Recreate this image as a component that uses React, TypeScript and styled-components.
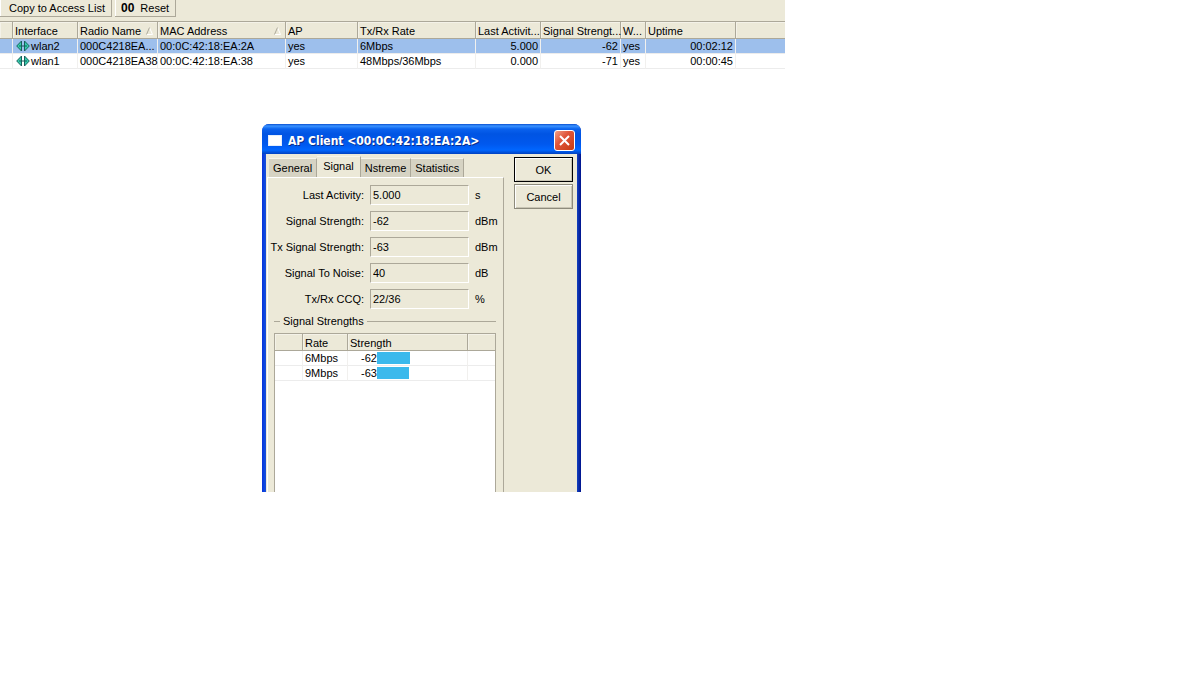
import React from "react";
import styled, { createGlobalStyle } from "styled-components";

const GlobalStyle = createGlobalStyle`
  *, *::before, *::after { box-sizing: border-box; }
  body {
    margin: 0;
    background: #fff;
    color: #000;
    font: 11px/15px "Liberation Sans", Arial, sans-serif;
  }
  button, input { font: inherit; color: inherit; margin: 0; }
`;

const ListPane = styled.section`
  width: 66%;
`;

const Toolbar = styled.div`
  display: flex;
  gap: 3px;
  height: 22px;
  padding-bottom: 4px;
  background: #ece9d8;
  border-bottom: 1px solid #aca899;
`;

const ToolButton = styled.button<{ $padLeft: number }>`
  display: flex;
  align-items: center;
  gap: 6px;
  padding: 0 6px 0 ${(p) => p.$padLeft}px;
  background: #ece9d8;
  border: solid #aca899;
  border-width: 0 1px 1px 0;
  box-shadow: inset 1px 0 #fff;
`;

const Counter = styled.b`
  font-size: 12px;
`;

const Grid = styled.table`
  width: 100%;
  table-layout: fixed;
  border-collapse: separate;
  border-spacing: 0;
`;

const HeadCell = styled.th`
  height: 17px;
  padding: 2px 0 0 2px;
  text-align: left;
  white-space: nowrap;
  font-weight: normal;
  line-height: 14px;
  background: #ece9d8;
  border-right: 1px solid #aca899;
  border-bottom: 1px solid #aca899;
  box-shadow: inset 1px 1px #f4f2e8;
  &:last-child { border-right: 0; }
`;

const HeadLine = styled.span`
  display: flex;
  align-items: center;
  justify-content: space-between;
  padding-right: 4px;
`;

const Row = styled.tr<{ $selected?: boolean }>`
  background: ${(p) => (p.$selected ? "#9dbfec" : "#fff")};
`;

const Cell = styled.td<{ $right?: boolean }>`
  height: 15px;
  padding: 0 2px;
  text-align: ${(p) => (p.$right ? "right" : "left")};
  white-space: nowrap;
  line-height: 14px;
  border-right: 1px solid #f1f0ee;
  border-bottom: 1px solid #ececec;
  &:last-child { border-right: 0; }
`;

const IconText = styled.span`
  display: flex;
  align-items: center;
  gap: 1px;
  padding-left: 1px;
`;

const Desktop = styled.main`
  padding: 55px 0 0 262px;
`;

const Dialog = styled.section`
  width: 319px;
  background: linear-gradient(90deg, #0831d9 0, #0b45e0 2px, #1c4fd8 4px, #0a3bd0 50%, #1240c0 calc(100% - 4px), #00138c 100%);
  border-radius: 7px 7px 0 0;
  overflow: hidden;
`;

const TitleBar = styled.header`
  display: flex;
  align-items: center;
  gap: 6px;
  height: 30px;
  padding: 3px 6px 0;
  background: linear-gradient(#0a4fd0 0, #3a93ff 2px, #0a62ee 5px, #0054e3 10px, #0058ee 20px, #0066ff 26px, #0040c0 30px);
`;

const WindowIcon = styled.span`
  width: 14px;
  height: 11px;
  background: #fff;
  border: 1px solid #e4eefc;
`;

const Title = styled.h1`
  flex: 1;
  margin: 0;
  color: #fff;
  font: bold 12px/16px "DejaVu Sans Condensed", "Liberation Sans", sans-serif;
  text-shadow: 1px 1px #0a2f8c;
`;

const CloseButton = styled.button`
  display: grid;
  place-items: center;
  width: 21px;
  height: 21px;
  padding: 0;
  background: linear-gradient(135deg, #f0a088, #e0563a 40%, #c63a12);
  border: 1px solid #fff;
  border-radius: 3px;
`;

const Body = styled.div`
  display: flex;
  gap: 10px;
  height: 338px;
  margin: 0 4px;
  padding: 2px 4px 0 1px;
  background: #ece9d8;
`;

const TabArea = styled.div`
  display: flex;
  flex-direction: column;
  flex: 1;
  min-width: 0;
`;

const Tabs = styled.div`
  display: flex;
  align-items: flex-end;
  height: 21px;
  padding-left: 2px;
`;

const Tab = styled.button<{ $active?: boolean }>`
  height: ${(p) => (p.$active ? 21 : 19)}px;
  padding: ${(p) => (p.$active ? "0 6px 2px" : "0 4px")};
  background: ${(p) => (p.$active ? "#ece9d8" : "#d6d3c3")};
  border: solid;
  border-width: 1px 1px 0 0;
  border-color: #f6f4ea #aca899 #f6f4ea #fff;
`;

const Panel = styled.div`
  flex: 1;
  padding: 7px 7px 0 6px;
  border: solid;
  border-width: 1px 1px 0;
  border-color: #fff #aca899 #fff #fff;
`;

const Field = styled.div`
  display: grid;
  grid-template-columns: 90px 99px 1fr;
  align-items: center;
  column-gap: 6px;
  height: 20px;
  margin-bottom: 6px;
`;

const FieldLabel = styled.label`
  justify-self: end;
  white-space: nowrap;
`;

const FieldInput = styled.input`
  width: 100%;
  height: 20px;
  padding: 0 2px;
  background: #ece9d8;
  border: 1px solid;
  border-color: #aca899 #fff #fff #aca899;
  outline: 0;
`;

const Legend = styled.h2`
  display: flex;
  align-items: center;
  gap: 3px;
  margin: 0 0 5px;
  font: inherit;
  line-height: 13px;
  &::before, &::after {
    content: "";
    width: 6px;
    border-top: 1px solid #aca899;
  }
  &::after { flex: 1; }
`;

const StrengthBox = styled.div`
  height: 159px;
  background: #fff;
  border: solid #aca899;
  border-width: 1px 1px 0;
`;

const Meter = styled.span`
  display: grid;
  grid-template-columns: 27px 1fr;
  align-items: center;
  text-align: right;
`;

const Bar = styled.span`
  height: 12px;
  background: #3bb9ec;
`;

const Actions = styled.div`
  display: flex;
  flex-direction: column;
  flex: none;
  gap: 2px;
  width: 59px;
  padding-top: 1px;
`;

const ActionButton = styled.button<{ $primary?: boolean }>`
  height: 25px;
  padding: 1px 0 0;
  background: #ece9d8;
  border: 1px solid ${(p) => (p.$primary ? "#000" : "#8e8b7c")};
  box-shadow: inset 1px 1px #fff, inset -1px -1px #c9c5b4;
`;

const LinkIcon = () => (
  <svg width="14" height="12" viewBox="0 0 14 12" aria-hidden="true">
    <path d="M0.7 6 5.5 1V11Z M13.3 6 8.5 1V11Z" fill="#35cfae" stroke="#17615c" />
    <path d="M3 6H11" stroke="#17615c" />
  </svg>
);

const SortMark = () => (
  <svg width="7" height="8" viewBox="0 0 7 8" aria-hidden="true">
    <path d="M3.5 0.5 6.5 7.5H0.5" stroke="#fff" fill="none" />
    <path d="M0.5 7.5 3.5 0.5" stroke="#aca899" fill="none" />
  </svg>
);

const columns = [
  { title: "", width: 13 },
  { title: "Interface", width: 65 },
  { title: "Radio Name", width: 80, sort: true },
  { title: "MAC Address", width: 128, sort: true },
  { title: "AP", width: 72 },
  { title: "Tx/Rx Rate", width: 118 },
  { title: "Last Activit...", width: 65 },
  { title: "Signal Strengt...", width: 80 },
  { title: "W...", width: 25 },
  { title: "Uptime", width: 90 },
  { title: "" },
];

const clients = [
  ["wlan2", "000C4218EA...", "00:0C:42:18:EA:2A", "yes", "6Mbps", "5.000", "-62", "yes", "00:02:12"],
  ["wlan1", "000C4218EA38", "00:0C:42:18:EA:38", "yes", "48Mbps/36Mbps", "0.000", "-71", "yes", "00:00:45"],
];
const rightAligned = [5, 6, 8];

const fields = [
  ["Last Activity:", "5.000", "s"],
  ["Signal Strength:", "-62", "dBm"],
  ["Tx Signal Strength:", "-63", "dBm"],
  ["Signal To Noise:", "40", "dB"],
  ["Tx/Rx CCQ:", "22/36", "%"],
];

const strengths = [
  { rate: "6Mbps", value: -62, bar: 33 },
  { rate: "9Mbps", value: -63, bar: 32 },
];

export default function App() {
  return (
    <>
      <GlobalStyle />
      <ListPane>
        <Toolbar>
          <ToolButton $padLeft={9}>Copy to Access List</ToolButton>
          <ToolButton $padLeft={6}>
            <Counter>00</Counter>Reset
          </ToolButton>
        </Toolbar>
        <Grid>
          <colgroup>
            {columns.map((c, i) => <col key={i} width={c.width} />)}
          </colgroup>
          <thead>
            <tr>
              {columns.map((c, i) => (
                <HeadCell key={i}>
                  {c.sort ? <HeadLine>{c.title}<SortMark /></HeadLine> : c.title}
                </HeadCell>
              ))}
            </tr>
          </thead>
          <tbody>
            {clients.map((client, r) => (
              <Row key={client[0]} $selected={r === 0}>
                <Cell />
                {client.map((text, i) => (
                  <Cell key={i} $right={rightAligned.includes(i)}>
                    {i === 0 ? <IconText><LinkIcon />{text}</IconText> : text}
                  </Cell>
                ))}
                <Cell />
              </Row>
            ))}
          </tbody>
        </Grid>
      </ListPane>
      <Desktop>
        <Dialog role="dialog" aria-labelledby="client-title">
          <TitleBar>
            <WindowIcon />
            <Title id="client-title">AP Client &lt;00:0C:42:18:EA:2A&gt;</Title>
            <CloseButton aria-label="Close">
              <svg width="13" height="13" viewBox="0 0 13 13" aria-hidden="true">
                <path d="M2 2 11 11M11 2 2 11" stroke="#fff" strokeWidth="2" />
              </svg>
            </CloseButton>
          </TitleBar>
          <Body>
            <TabArea>
              <Tabs role="tablist">
                <Tab role="tab">General</Tab>
                <Tab role="tab" aria-selected $active>Signal</Tab>
                <Tab role="tab">Nstreme</Tab>
                <Tab role="tab">Statistics</Tab>
              </Tabs>
              <Panel role="tabpanel">
                {fields.map(([label, value, unit], i) => (
                  <Field key={label}>
                    <FieldLabel htmlFor={`field-${i}`}>{label}</FieldLabel>
                    <FieldInput id={`field-${i}`} readOnly value={value} />
                    <span>{unit}</span>
                  </Field>
                ))}
                <Legend>Signal Strengths</Legend>
                <StrengthBox>
                  <Grid>
                    <colgroup>
                      <col width={28} />
                      <col width={45} />
                      <col width={120} />
                      <col />
                    </colgroup>
                    <thead>
                      <tr>
                        <HeadCell />
                        <HeadCell>Rate</HeadCell>
                        <HeadCell>Strength</HeadCell>
                        <HeadCell />
                      </tr>
                    </thead>
                    <tbody>
                      {strengths.map((s) => (
                        <Row key={s.rate}>
                          <Cell />
                          <Cell>{s.rate}</Cell>
                          <Cell>
                            <Meter>{s.value}<Bar style={{ width: s.bar }} /></Meter>
                          </Cell>
                          <Cell />
                        </Row>
                      ))}
                    </tbody>
                  </Grid>
                </StrengthBox>
              </Panel>
            </TabArea>
            <Actions>
              <ActionButton $primary>OK</ActionButton>
              <ActionButton>Cancel</ActionButton>
            </Actions>
          </Body>
        </Dialog>
      </Desktop>
    </>
  );
}
